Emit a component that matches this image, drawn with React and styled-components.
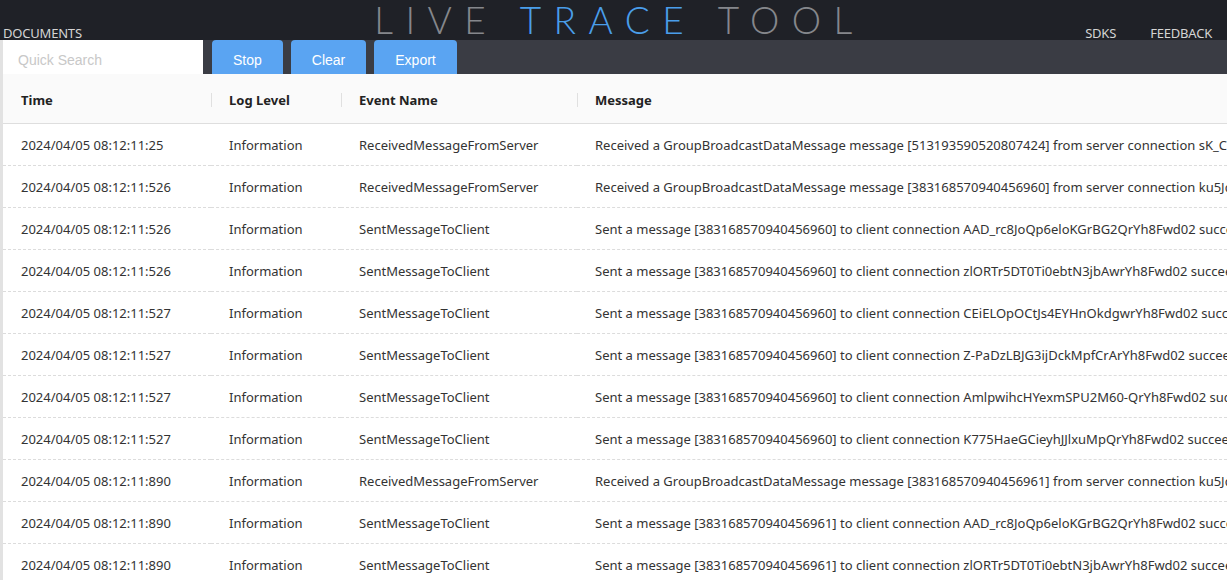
import styled, { createGlobalStyle } from "styled-components";

const GlobalStyle = createGlobalStyle`
  html, body {
    margin: 0;
    padding: 0;
    background: #fafafa;
    overflow: hidden;
  }
`;

const Page = styled.div`
  width: 1227px;
  height: 580px;
  overflow: hidden;
  font-family: "Noto Sans", "Open Sans", sans-serif;
`;

const TopBar = styled.header`
  height: 40px;
  background: #1f2127;
  display: grid;
  grid-template-columns: 1fr auto 1fr;
  align-items: end;
`;

const NavLink = styled.a`
  color: #d4d4d4;
  font-size: 13px;
  line-height: 14px;
  text-transform: uppercase;
  text-decoration: none;
  letter-spacing: -0.2px;
`;

const LeftNav = styled.nav`
  display: flex;
  padding-left: 3px;
  height: 40px;
  align-items: flex-end;
`;

const RightNav = styled.nav`
  display: flex;
  justify-content: flex-end;
  gap: 34px;
  padding-right: 15px;
  height: 40px;
  align-items: flex-end;
`;

const Title = styled.h1`
  margin: 0 -12px 0 0;
  align-self: start;
  font-family: "Lato", "Open Sans", sans-serif;
  font-weight: 300;
  font-size: 37px;
  line-height: 40px;
  height: 40px;
  letter-spacing: 12.5px;
  color: #85878c;
  white-space: nowrap;
`;

const Accent = styled.span`
  color: #4a9eea;
`;

const Main = styled.main`
  border-left: 3px solid #e2e2e2;
`;

const Toolbar = styled.div`
  height: 34px;
  background: #3a3c44;
  display: flex;
  gap: 8px;
`;

const Search = styled.input`
  width: 200px;
  height: 34px;
  box-sizing: border-box;
  border: none;
  outline: none;
  padding: 5px 15px 0;
  margin-right: 1px;
  font-family: "Liberation Sans", Arial, sans-serif;
  font-size: 14px;
  background: #fff;
  &::placeholder {
    color: #c8c8c8;
  }
`;

const Button = styled.button`
  height: 34px;
  padding: 5px 21px 0;
  border: none;
  border-radius: 4px 4px 0 0;
  background: #5aa4f2;
  color: #fff;
  font-family: "Liberation Sans", Arial, sans-serif;
  font-size: 14px;
  cursor: pointer;
`;

const Table = styled.div`
  display: grid;
  grid-template-columns: 208px 130px 236px 1fr;
  background: #fff;
`;

const HeadCell = styled.div`
  display: flex;
  align-items: center;
  position: relative;
  padding: 2px 0 0 18px;
  box-sizing: border-box;
  height: 50px;
  font-weight: 700;
  font-size: 13px;
  color: #222;
  background: #fafafa;
  border-bottom: 1px solid #dedede;
  white-space: nowrap;

  &::before {
    content: "";
    display: ${(p) => (p.$divider ? "block" : "none")};
    position: absolute;
    left: 0;
    top: 19px;
    height: 14px;
    width: 1px;
    background: #e0e0e0;
  }
`;

const Cell = styled.div`
  height: 41px;
  display: flex;
  align-items: center;
  padding-left: 18px;
  font-size: 13px;
  color: #333;
  border-bottom: 1px dashed #dcdcdc;
  white-space: nowrap;
  overflow: hidden;
`;

const rows = [
  ["2024/04/05 08:12:11:25", "ReceivedMessageFromServer", "Received a GroupBroadcastDataMessage message [513193590520807424] from server connection sK_C7hQ2Lw3xY8Fwd02 successfully."],
  ["2024/04/05 08:12:11:526", "ReceivedMessageFromServer", "Received a GroupBroadcastDataMessage message [383168570940456960] from server connection ku5Jd0rYh8Fwd02 successfully."],
  ["2024/04/05 08:12:11:526", "SentMessageToClient", "Sent a message [383168570940456960] to client connection AAD_rc8JoQp6eloKGrBG2QrYh8Fwd02 succeeded."],
  ["2024/04/05 08:12:11:526", "SentMessageToClient", "Sent a message [383168570940456960] to client connection zlORTr5DT0Ti0ebtN3jbAwrYh8Fwd02 succeeded."],
  ["2024/04/05 08:12:11:527", "SentMessageToClient", "Sent a message [383168570940456960] to client connection CEiELOpOCtJs4EYHnOkdgwrYh8Fwd02 succeeded."],
  ["2024/04/05 08:12:11:527", "SentMessageToClient", "Sent a message [383168570940456960] to client connection Z-PaDzLBJG3ijDckMpfCrArYh8Fwd02 succeeded."],
  ["2024/04/05 08:12:11:527", "SentMessageToClient", "Sent a message [383168570940456960] to client connection AmlpwihcHYexmSPU2M60-QrYh8Fwd02 succeeded."],
  ["2024/04/05 08:12:11:527", "SentMessageToClient", "Sent a message [383168570940456960] to client connection K775HaeGCieyhJJlxuMpQrYh8Fwd02 succeeded."],
  ["2024/04/05 08:12:11:890", "ReceivedMessageFromServer", "Received a GroupBroadcastDataMessage message [383168570940456961] from server connection ku5Jd0rYh8Fwd02 successfully."],
  ["2024/04/05 08:12:11:890", "SentMessageToClient", "Sent a message [383168570940456961] to client connection AAD_rc8JoQp6eloKGrBG2QrYh8Fwd02 succeeded."],
  ["2024/04/05 08:12:11:890", "SentMessageToClient", "Sent a message [383168570940456961] to client connection zlORTr5DT0Ti0ebtN3jbAwrYh8Fwd02 succeeded."],
];

export default function App() {
  return (
    <Page>
      <GlobalStyle />
      <TopBar>
        <LeftNav>
          <NavLink>Documents</NavLink>
        </LeftNav>
        <Title>
          LIVE <Accent>TRACE</Accent> TOOL
        </Title>
        <RightNav>
          <NavLink>SDKs</NavLink>
          <NavLink>Feedback</NavLink>
        </RightNav>
      </TopBar>
      <Main>
        <Toolbar>
          <Search placeholder="Quick Search" />
          <Button>Stop</Button>
          <Button>Clear</Button>
          <Button>Export</Button>
        </Toolbar>
        <Table>
          <HeadCell>Time</HeadCell>
          <HeadCell $divider>Log Level</HeadCell>
          <HeadCell $divider>Event Name</HeadCell>
          <HeadCell $divider>Message</HeadCell>
          {rows.map(([time, event, msg], i) => (
            <>
              <Cell key={`t${i}`}>{time}</Cell>
              <Cell key={`l${i}`}>Information</Cell>
              <Cell key={`e${i}`}>{event}</Cell>
              <Cell key={`m${i}`}>{msg}</Cell>
            </>
          ))}
        </Table>
      </Main>
    </Page>
  );
}
